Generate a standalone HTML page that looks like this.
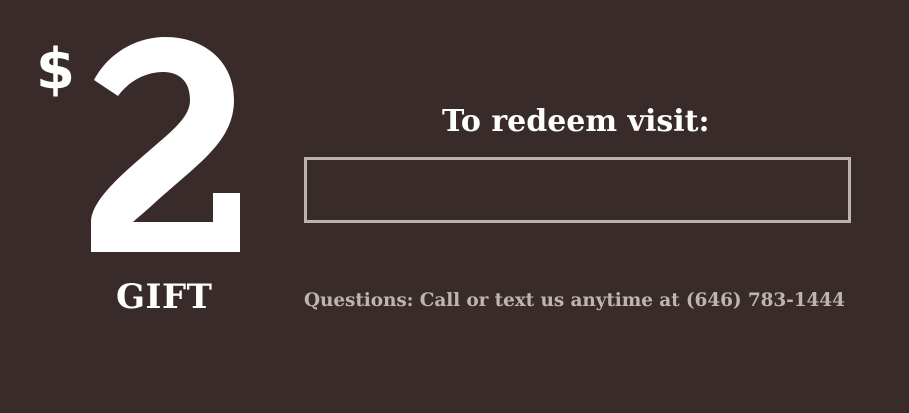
<!DOCTYPE html>
<html><head><meta charset="utf-8"><style>
html,body{margin:0;padding:0;}
body{width:909px;height:413px;background:#382b29;position:relative;overflow:hidden;font-family:"DejaVu Serif","Liberation Serif",serif;}
.t{position:absolute;white-space:nowrap;}
</style></head><body>
<svg width="909" height="413" style="position:absolute;left:0;top:0">
<path fill="#fff" d="M94,80 C110,50 140,37 165,37 C205,37 234,62 234,100 C234,130 215,150 190,172 L160,198 C145,212 135,220 133,222 L213,222 L213,193 L240,193 L240,252 L91,252 L91,222 C91,205 110,185 135,163 L165,137 C182,122 190,112 190,100 C190,82 180,72 163,72 C145,72 128,82 118,96 Z"/>
</svg>
<div class="t" style="left:36px;top:36px;font-family:'DejaVu Sans',sans-serif;font-weight:bold;font-size:56px;color:#fff;line-height:68px;">$</div>
<div class="t" style="left:116px;top:275px;font-size:34px;font-weight:bold;color:#fff;line-height:44px;letter-spacing:0.5px;">GIFT</div>
<div class="t" style="left:442px;top:102px;font-size:30px;font-weight:bold;color:#fff;line-height:40px;letter-spacing:0px;">To redeem visit:</div>
<div style="position:absolute;left:304px;top:157px;width:541px;height:60px;border:3px solid #bab3b0;"></div>
<div class="t" style="left:304px;top:288px;font-size:18.5px;font-weight:bold;color:#bdb5b2;line-height:26px;letter-spacing:-0.1px;">Questions: Call or text us anytime at (646) 783-1444</div>
</body></html>
